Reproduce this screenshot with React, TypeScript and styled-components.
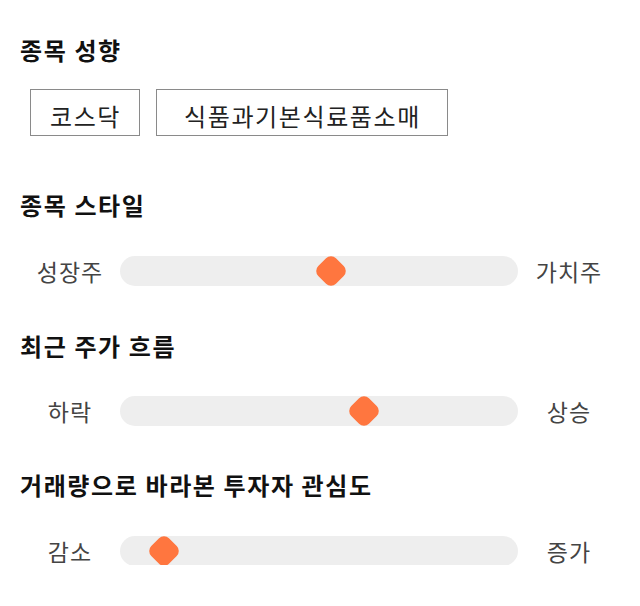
import React from "react";
import styled, { createGlobalStyle } from "styled-components";

const GlobalStyle = createGlobalStyle`
  html, body {
    margin: 0;
    padding: 0;
    background: #ffffff;
    font-family: "Noto Sans CJK KR", "Noto Sans", sans-serif;
  }
`;

const Page = styled.div`
  width: 640px;
  box-sizing: border-box;
  padding: 33px 20px 0 20px;
  display: flex;
  flex-direction: column;
`;

const Section = styled.section<{ $gap: number; $after: number }>`
  display: flex;
  flex-direction: column;
  gap: ${(p) => p.$gap}px;
  margin-bottom: ${(p) => p.$after}px;
`;

const Heading = styled.h2`
  margin: 0;
  font-size: 24px;
  line-height: 34px;
  font-weight: 700;
  letter-spacing: 1.6px;
  color: #111111;
`;

const TagList = styled.div`
  display: flex;
  gap: 16px;
  margin-left: 10px;
`;

const Tag = styled.div<{ $pad: number }>`
  box-sizing: border-box;
  height: 47px;
  padding: 6px ${(p) => p.$pad - 1}px 0 ${(p) => p.$pad}px;
  border: 1px solid #8a8a8a;
  display: flex;
  align-items: center;
  justify-content: center;
  font-size: 24px;
  letter-spacing: 1.6px;
  color: #222222;
`;

const SliderRow = styled.div`
  display: grid;
  grid-template-columns: 100px 1fr 102px;
  align-items: center;
  height: 30px;
`;

const EndLabel = styled.span`
  text-align: center;
  font-size: 23px;
  letter-spacing: 1px;
  color: #444444;
  line-height: 30px;
  padding-top: 1px;
`;

const Track = styled.div`
  position: relative;
  height: 30px;
  border-radius: 15px;
  background: #eeeeee;
`;

const Thumb = styled.div`
  position: absolute;
  top: 50%;
  width: 25px;
  height: 25px;
  border-radius: 7px;
  background: #ff763f;
  transform: translate(-50%, -50%) rotate(45deg);
`;

type SliderProps = { left: string; right: string; value: number };

const Slider: React.FC<SliderProps> = ({ left, right, value }) => (
  <SliderRow>
    <EndLabel>{left}</EndLabel>
    <Track>
      <Thumb style={{ left: `${value * 100}%` }} />
    </Track>
    <EndLabel>{right}</EndLabel>
  </SliderRow>
);

export default function App() {
  return (
    <>
      <GlobalStyle />
      <Page>
        <Section $gap={22} $after={52}>
          <Heading>종목 성향</Heading>
          <TagList>
            <Tag $pad={19}>코스닥</Tag>
            <Tag $pad={27}>식품과기본식료품소매</Tag>
          </TagList>
        </Section>
        <Section $gap={33} $after={44}>
          <Heading>종목 스타일</Heading>
          <Slider left="성장주" right="가치주" value={0.53} />
        </Section>
        <Section $gap={32} $after={43}>
          <Heading>최근 주가 흐름</Heading>
          <Slider left="하락" right="상승" value={0.613} />
        </Section>
        <Section $gap={33} $after={0}>
          <Heading>거래량으로 바라본 투자자 관심도</Heading>
          <Slider left="감소" right="증가" value={0.111} />
        </Section>
      </Page>
    </>
  );
}
